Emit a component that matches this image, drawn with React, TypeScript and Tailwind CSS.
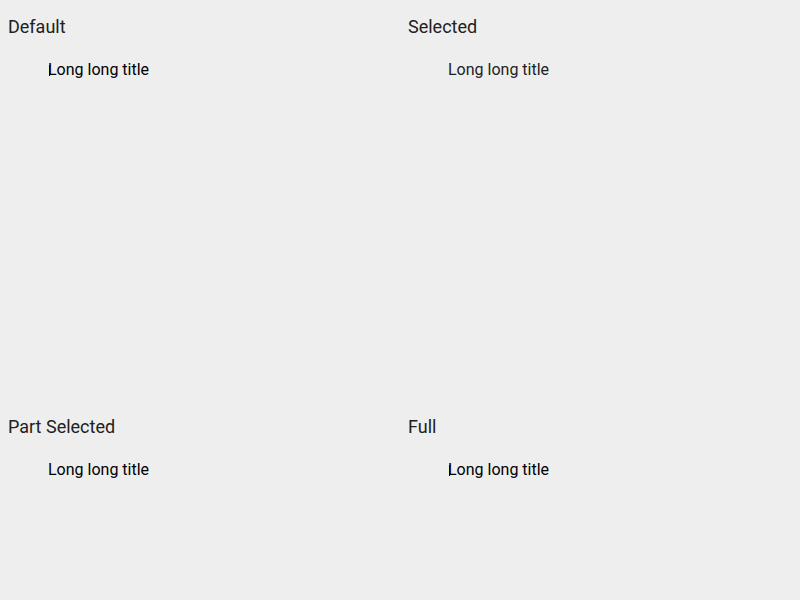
const cells = [
  { label: 'Default', color: 'text-black', caret: true },
  { label: 'Selected', color: 'text-[#222222]', caret: false },
  { label: 'Part Selected', color: 'text-black', caret: false },
  { label: 'Full', color: 'text-black', caret: true },
];

export default function App() {
  return (
    <div className="grid h-[600px] w-[800px] grid-cols-2 grid-rows-[400px_200px] bg-[#eeeeee] font-['Roboto',sans-serif]">
      {cells.map((c) => (
        <div key={c.label} className="overflow-hidden px-2 pt-[13px]">
          <h2 className="text-[18px] leading-[28px] text-[#212121]">{c.label}</h2>
          <div className="pl-10 pt-[17px]">
            <span className={`relative text-[16px] leading-[22px] ${c.color}`}>
              {/* text caret */}
              {c.caret && <span className="absolute left-0 top-[5px] h-[11px] w-px translate-x-[1px] bg-black" />}
              Long long title
            </span>
          </div>
        </div>
      ))}
    </div>
  );
}
